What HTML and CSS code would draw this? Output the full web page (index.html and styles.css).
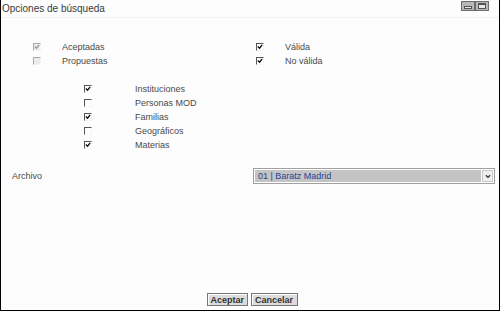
FILE: index.html
```html
<!doctype html>
<html>

<head>
	<title>Opciones de búsqueda</title>
	<link rel="stylesheet" href="styles.css">
</head>

<body>
	<div id='window'>
		<div id='title-bar'>
			<p id='title'>Opciones de búsqueda</p>
			<div id='window-buttons'>
				<span class='win-btn'><span class='win-min'></span></span>
				<span class='win-btn'><span class='win-max'></span></span>
			</div>
		</div>
		<div id='state-options'>
			<div class='option-list'>
				<div class='option'><span class='cb disabled checked'><svg viewBox='0 0 7 7'><path d='M1 3 L3 5 L6 1' /></svg></span><span class='label'>Aceptadas</span></div>
				<div class='option'><span class='cb disabled'></span><span class='label'>Propuestas</span></div>
			</div>
			<div class='option-list' id='valid-list'>
				<div class='option'><span class='cb checked'><svg viewBox='0 0 7 7'><path d='M1 3 L3 5 L6 1' /></svg></span><span class='label'>Válida</span></div>
				<div class='option'><span class='cb checked'><svg viewBox='0 0 7 7'><path d='M1 3 L3 5 L6 1' /></svg></span><span class='label'>No válida</span></div>
			</div>
		</div>
		<div class='option-list' id='type-list'>
			<div class='option'><span class='cb checked'><svg viewBox='0 0 7 7'><path d='M1 3 L3 5 L6 1' /></svg></span><span class='label'>Instituciones</span></div>
			<div class='option'><span class='cb'></span><span class='label'>Personas MOD</span></div>
			<div class='option'><span class='cb checked'><svg viewBox='0 0 7 7'><path d='M1 3 L3 5 L6 1' /></svg></span><span class='label'>Familias</span></div>
			<div class='option'><span class='cb'></span><span class='label'>Geográficos</span></div>
			<div class='option'><span class='cb checked'><svg viewBox='0 0 7 7'><path d='M1 3 L3 5 L6 1' /></svg></span><span class='label'>Materias</span></div>
		</div>
		<div id='archive-row'>
			<span id='archive-label'>Archivo</span>
			<div id='archive-select'>
				<span id='archive-value'>01 | Baratz Madrid</span>
				<span id='select-arrow'><svg viewBox='0 0 7 5'><path d='M1 1 L3.5 3.5 L6 1' /></svg></span>
			</div>
		</div>
		<div id='buttons'>
			<button class='action'>Aceptar</button>
			<button class='action'>Cancelar</button>
		</div>
	</div>
</body>

</html>
```

FILE: styles.css
```css
		html, body {
			margin: 0;
			padding: 0;
			width: 100%;
			height: 100%;
			background-color: #fdfdfd;
			font-size: 9px;
			font-family: 'Liberation Sans', Arial, sans-serif;
			color: #4a4a4a;
		}
		#window {
			box-sizing: border-box;
			width: 500px;
			height: 311px;
			border-left: 1px solid #000;
			border-right: 1px solid #000;
			border-bottom: 1px solid #000;
			display: flex;
			flex-direction: column;
		}

		#title-bar {
			height: 17px;
			display: flex;
			justify-content: space-between;
			align-items: flex-start;
			border-bottom: 1px solid #f2f2f2;
		}
		#title {
			margin: 3px 0 0 1px;
			font-size: 10px;
			color: #3a3a3a;
		}
		#window-buttons {
			display: flex;
			margin: 1px 10px 0 0;
		}
		.win-btn {
			box-sizing: border-box;
			width: 14px;
			height: 10px;
			background-color: #b8b8b8;
			border: 1px solid #6c6c6c;
			display: flex;
			align-items: center;
			justify-content: center;
		}
		.win-min {
			width: 8px;
			height: 3px;
			border: 1px solid #555;
			background-color: #e8e8e8;
			box-sizing: border-box;
			margin-top: 2px;
		}
		.win-max {
			width: 8px;
			height: 6px;
			border: 1px solid #555;
			border-top-width: 2px;
			background-color: #e8e8e8;
			box-sizing: border-box;
		}

		#state-options {
			display: flex;
			margin-top: 22px;
			padding-left: 32px;
		}
		.option-list {
			display: flex;
			flex-direction: column;
		}
		.option {
			display: flex;
			align-items: center;
			height: 14px;
		}
		.cb {
			box-sizing: border-box;
			width: 8px;
			height: 8px;
			border-top: 1px solid #555;
			border-left: 1px solid #555;
			border-right: 1px solid #f4f4f4;
			border-bottom: 1px solid #f4f4f4;
			background-color: #fff;
			display: flex;
		}
		.cb svg {
			width: 6px;
			height: 6px;
		}
		.cb svg path {
			fill: none;
			stroke: #111;
			stroke-width: 1.6;
		}
		.cb.disabled {
			border-top-color: #a8a8a8;
			border-left-color: #a8a8a8;
			background-color: #ececec;
		}
		.cb.disabled svg path {
			stroke: #999;
		}
		#state-options .label {
			margin-left: 21px;
			width: 194px;
		}
		#type-list {
			margin-top: 14px;
			padding-left: 83px;
		}
		#type-list .label {
			margin-left: 43px;
		}

		#archive-row {
			display: flex;
			align-items: center;
			margin-top: 16px;
			padding-left: 11px;
		}
		#archive-label {
			width: 241px;
		}
		#archive-select {
			box-sizing: border-box;
			width: 242px;
			height: 16px;
			border: 1px solid #a0a0a0;
			background-color: #fff;
			display: flex;
			padding: 1px;
		}
		#archive-value {
			flex: 1;
			background-color: #c4c4c4;
			color: #2b3f91;
			padding-left: 3px;
			line-height: 12px;
		}
		#select-arrow {
			width: 11px;
			margin-left: 1px;
			display: flex;
			align-items: center;
			justify-content: center;
			background-color: #f0f0f0;
			border: 1px solid #c8c8c8;
			box-sizing: border-box;
		}
		#select-arrow svg {
			width: 6px;
			height: 5px;
		}
		#select-arrow svg path {
			fill: none;
			stroke: #333;
			stroke-width: 1.5;
		}

		#buttons {
			margin-top: auto;
			margin-bottom: 4px;
			display: flex;
			justify-content: center;
			gap: 3px;
			padding-left: 4px;
		}
		.action {
			box-sizing: border-box;
			height: 13px;
			padding: 0 3px;
			font-family: 'Liberation Sans', Arial, sans-serif;
			font-size: 9px;
			font-weight: bold;
			color: #333;
			background-color: #dcdcdc;
			border: 1px solid #777;
			box-shadow: inset 1px 1px 0 #fff;
			line-height: 10px;
		}
		.action:first-child {
			width: 41px;
		}
		.action:last-child {
			width: 47px;
		}
```
